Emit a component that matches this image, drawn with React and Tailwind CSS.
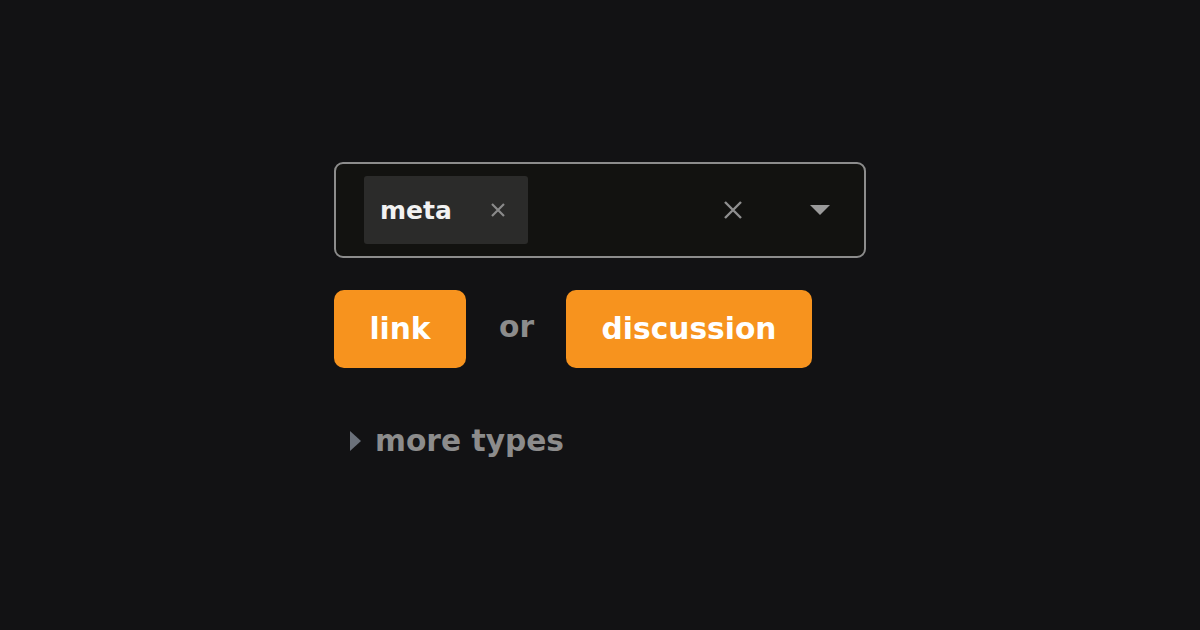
export default function App() {
  return (
    <div className="w-[1200px] h-[630px] bg-[#121214] flex justify-center" style={{ fontFamily: '"DejaVu Sans", sans-serif' }}>
      <div className="w-[532px] pt-[162px] flex flex-col">
        <div className="h-[96px] rounded-[9px] border-2 border-[#8c8c8c] bg-[#121210] flex items-center pl-[28px] pr-[34px]">
          <div className="h-[68px] w-[164px] rounded-[3px] bg-[#2b2b2a] flex items-center pl-[16px]">
            <span className="text-[25px] font-bold text-[#f2f2f2] leading-none">meta</span>
            <svg className="ml-[38px]" width="16" height="16" viewBox="0 0 16 16">
              <path d="M2 2L14 14M14 2L2 14" stroke="#8a8a8a" strokeWidth="2.2" />
            </svg>
          </div>
          <div className="flex-1" />
          <svg width="20" height="20" viewBox="0 0 20 20" className="mr-[67px]">
            <path d="M2 2L18 18M18 2L2 18" stroke="#8f8f8f" strokeWidth="2.4" />
          </svg>
          <svg width="20" height="10" viewBox="0 0 20 10">
            <path d="M0 0H20L10 10Z" fill="#9a9a9a" />
          </svg>
        </div>
        <div className="mt-[32px] flex items-center">
          <div className="h-[78px] w-[132px] rounded-[10px] bg-[#f7931e] flex items-center justify-center">
            <span className="text-[29.7px] font-bold text-white leading-none">link</span>
          </div>
          <span className="ml-[33px] mr-[32px] text-[29.7px] font-bold text-[#8c8c8c] leading-none -mt-[4px]">or</span>
          <div className="h-[78px] w-[246px] rounded-[10px] bg-[#f7931e] flex items-center justify-center">
            <span className="text-[29.7px] font-bold text-white leading-none">discussion</span>
          </div>
        </div>
        <div className="mt-[58px] pl-[16px] flex items-center gap-[14px]">
          <svg width="11" height="20" viewBox="0 0 11 20">
            <path d="M0 0L11 10L0 20Z" fill="#6b717b" />
          </svg>
          <span className="text-[29.7px] font-bold text-[#8c8c8c] leading-none">more types</span>
        </div>
      </div>
    </div>
  );
}
